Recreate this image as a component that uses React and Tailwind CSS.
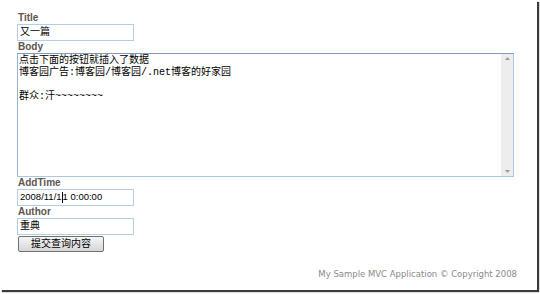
import React from "react";

function Label({ children }) {
  return (
    <div className="h-[12px] pl-[18px] font-['Liberation_Sans',sans-serif] text-[10px] leading-[12px] font-bold text-[#5e5650]">
      {children}
    </div>
  );
}

function Field({ children }) {
  return (
    <div className="ml-[17px] flex h-[17px] w-[117px] items-center border border-[#b3cfe8] bg-white px-[2px] font-['Liberation_Sans','Noto_Sans_CJK_SC',sans-serif] text-[9.5px] text-black">
      {children}
    </div>
  );
}

function Body() {
  return (
    <div className="ml-[17px] flex h-[124px] w-[497px] border border-[#a9c8e4] border-t-[#7f9db9] border-l-[#95b3cf] bg-white">
      <div className="flex-1 whitespace-pre px-[1px] pt-[1px] font-['Liberation_Mono','Noto_Sans_CJK_SC',monospace] text-[10px] leading-[12px] text-black">
        {"点击下面的按钮就插入了数据\n博客园广告:博客园/博客园/.net博客的好家园\n\n群众:汗~~~~~~~~"}
      </div>
      <div className="flex w-[12px] flex-col items-center justify-between bg-[#ededed] py-[3px]">
        <svg width="5" height="3" viewBox="0 0 5 3">
          <path d="M2.5 0 L5 3 L0 3 Z" fill="#9a9a9a" />
        </svg>
        <svg width="5" height="3" viewBox="0 0 5 3">
          <path d="M0 0 L5 0 L2.5 3 Z" fill="#9a9a9a" />
        </svg>
      </div>
    </div>
  );
}

export default function App() {
  return (
    <div className="h-[294px] w-[540px] bg-white">
      <div className="flex h-[290px] w-[537px] flex-col bg-white pt-[12px] shadow-[2px_2px_1px_#3a3a3a]">
        <Label>Title</Label>
        <Field>
          <span className="font-['Liberation_Mono','Noto_Sans_CJK_SC',monospace] text-[10px]">又一篇</span>
        </Field>
        <Label>Body</Label>
        <Body />
        <Label>AddTime</Label>
        <Field>
          <span>2008/11/1</span>
          <span className="inline-block h-[11px] w-px bg-black" />
          <span>1 0:00:00</span>
        </Field>
        <Label>Author</Label>
        <Field>
          <span className="font-['Liberation_Mono','Noto_Sans_CJK_SC',monospace] text-[10px]">重典</span>
        </Field>
        <div className="ml-[18px] mt-[1px] flex h-[16px] w-[86px] items-center justify-center rounded-[2px] border border-[#707070] bg-gradient-to-b from-[#f6f6f6] to-[#d6d6d6] font-['Liberation_Mono','Noto_Sans_CJK_SC',monospace] text-[10px] text-black">
          提交查询内容
        </div>
        <div className="mt-auto mb-[9px] flex justify-end pr-[20px] font-['DejaVu_Sans',sans-serif] text-[8.5px] text-[#8a8a8a]">
          My Sample MVC Application © Copyright 2008
        </div>
      </div>
    </div>
  );
}
